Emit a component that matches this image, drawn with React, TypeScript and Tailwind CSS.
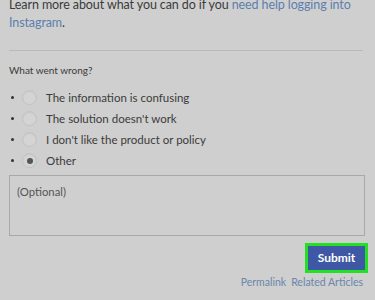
import React, { useState } from 'react';

const reasons = [
  'The information is confusing',
  "The solution doesn't work",
  "I don't like the product or policy",
  'Other',
];

export default function App() {
  const [selected, setSelected] = useState('Other');

  return (
    <div
      className="w-[375px] h-[300px] overflow-hidden bg-[#cfcfcf] text-[#3b3b3b]"
      style={{ fontFamily: 'Lato, "Open Sans", sans-serif' }}
    >
      <div className="pl-[9px] pr-[12px]">
        <p className="-mt-[4px] text-[12.5px] leading-[18px] tracking-[-0.1px] whitespace-nowrap">
          Learn more about what you can do if you{' '}
          <span className="text-[#5b7fae]">need help logging into</span>
          <br />
          <span className="text-[#5b7fae]">Instagram</span>.
        </p>

        <div className="mt-[18px] h-px bg-[#b9b9b9]" />

        <div className="mt-[12px] text-[10px] leading-[14px]">What went wrong?</div>

        <ul className="mt-[10px] flex flex-col">
          {reasons.map((reason) => (
            <li
              key={reason}
              className="flex items-center h-[21px] cursor-pointer"
              onClick={() => setSelected(reason)}
            >
              <span className="w-[3px] h-[3px] rounded-full bg-[#333] ml-[2px]" />
              <span className="ml-[8px] w-[15px] h-[15px] rounded-full border border-[#c2c2c2] bg-[#d4d4d4] shadow-[inset_0_1px_1px_rgba(0,0,0,0.06)] flex items-center justify-center">
                {selected === reason && <span className="w-[6px] h-[6px] rounded-full bg-[#555]" />}
              </span>
              <span className="ml-[9px] text-[11.5px]">{reason}</span>
            </li>
          ))}
        </ul>

        <div className="mt-[4px] mr-[-2px] h-[61px] border border-[#a8a8a8] px-[7px] pt-[8px] text-[11.3px] text-[#555]">
          (Optional)
        </div>

        <div className="flex justify-end mt-[7px] mr-[-5px]">
          <button className="border-[3px] border-[#22e022] bg-[#3e58a5] w-[63px] h-[30px] text-white text-[12px] font-bold">
            Submit
          </button>
        </div>

        <div className="flex justify-end gap-[5px] mt-[2px] text-[10.5px] text-[#6a86ab]">
          <span>Permalink</span>
          <span>Related Articles</span>
        </div>
      </div>
    </div>
  );
}
